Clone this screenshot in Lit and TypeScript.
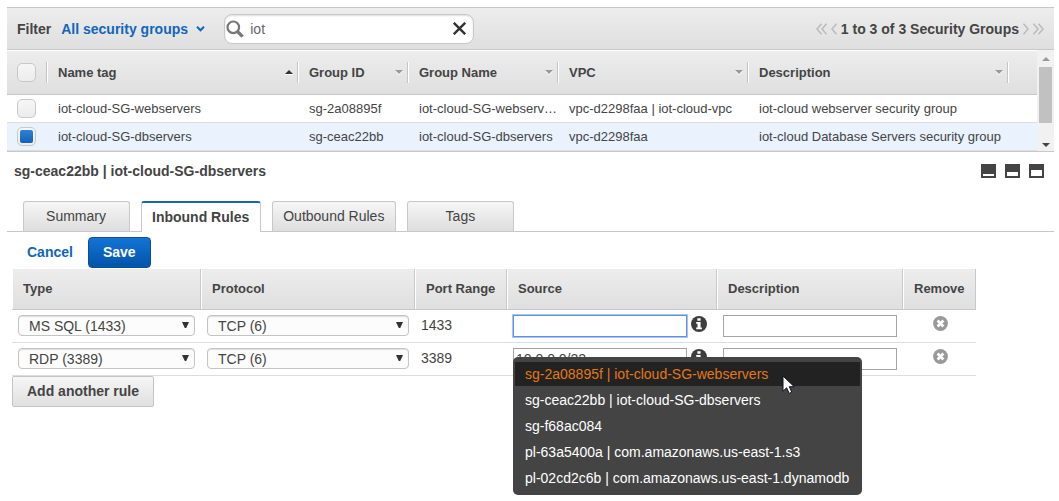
import { LitElement, html, css, svg } from "lit";
import { customElement, state } from "lit/decorators.js";
import { classMap } from "lit/directives/class-map.js";

interface Group {
  name: string;
  id: string;
  group: string;
  vpc: string;
  description: string;
}

interface Rule {
  type: string;
  port: string;
  source: string;
}

const GROUPS: Group[] = [
  {
    name: "iot-cloud-SG-webservers",
    id: "sg-2a08895f",
    group: "iot-cloud-SG-webservers",
    vpc: "vpc-d2298faa | iot-cloud-vpc",
    description: "iot-cloud webserver security group",
  },
  {
    name: "iot-cloud-SG-dbservers",
    id: "sg-ceac22bb",
    group: "iot-cloud-SG-dbservers",
    vpc: "vpc-d2298faa",
    description: "iot-cloud Database Servers security group",
  },
];

const COLUMNS = [
  { label: "Name tag", cls: "c-name" },
  { label: "Group ID", cls: "c-id" },
  { label: "Group Name", cls: "c-group" },
  { label: "VPC", cls: "c-vpc" },
  { label: "Description", cls: "c-desc" },
];

const RULES: Rule[] = [
  { type: "MS SQL (1433)", port: "1433", source: "" },
  { type: "RDP (3389)", port: "3389", source: "10.0.0.0/22" },
];

const TABS = ["Summary", "Inbound Rules", "Outbound Rules", "Tags"];

const SUGGESTIONS = [
  "sg-2a08895f | iot-cloud-SG-webservers",
  "sg-ceac22bb | iot-cloud-SG-dbservers",
  "sg-f68ac084",
  "pl-63a5400a | com.amazonaws.us-east-1.s3",
  "pl-02cd2c6b | com.amazonaws.us-east-1.dynamodb",
];

const icon = (w: number, h: number, body: unknown, cls = "") =>
  html`<svg class=${cls} width=${w} height=${h} viewBox="0 0 ${w} ${h}" aria-hidden="true">${body}</svg>`;

const stroke = (d: string, color: string, width: number) =>
  svg`<path d=${d} fill="none" stroke=${color} stroke-width=${width} />`;

const infoIcon = icon(
  16,
  16,
  svg`<circle cx="8" cy="8" r="8" fill="#3d3d3d" />
    <path d="M6.4 2.2h3.2v2.6H6.4z M5.2 6h4.4v5.4h1.3v1.8H5.2v-1.8h1.3V7.7H5.2z" fill="#fff" />`
);

const removeIcon = icon(
  15,
  15,
  svg`<circle cx="7.5" cy="7.5" r="7.4" fill="#999" />
    <path d="M4.6 4.6l5.8 5.8M10.4 4.6l-5.8 5.8" stroke="#fff" stroke-width="2.8" />`
);

const pointer = icon(
  13,
  20,
  svg`<path d="M1 1v15.2l3.6-3.4 2.6 5.6 2.6-1.2-2.5-5.5h4.9z" fill="#fff" stroke="#112" stroke-width="1" />`,
  "pointer"
);

@customElement("app-root")
export class AppRoot extends LitElement {
  @state() private selected = 1;
  @state() private tab = 1;

  static styles = css`
    :host {
      display: block;
      box-sizing: border-box;
      min-height: 100vh;
      padding: 7px 5px 6px 7px;
      color: #444;
      background: #fff;
      font: 13px/16px "Liberation Sans", Arial, sans-serif;
    }
    * {
      box-sizing: border-box;
    }
    button,
    input,
    select {
      margin: 0;
      color: inherit;
      font: inherit;
    }
    button {
      cursor: pointer;
    }
    svg {
      display: block;
      flex: none;
    }
    .plain {
      padding: 0;
      border: 0;
      background: none;
    }

    .filter {
      display: flex;
      align-items: center;
      height: 43px;
      padding: 0 10px;
      border: solid #c8c8c8;
      border-width: 1px 0;
      background: linear-gradient(#ededed, #dfdfdf);
      font-size: 14px;
      font-weight: bold;
    }
    .scope {
      display: grid;
      align-items: center;
      margin: 0 19px 0 10px;
      color: #1166bb;
    }
    .scope > * {
      grid-area: 1 / 1;
    }
    .scope select {
      appearance: none;
      padding: 0 17px 0 0;
      border: 0;
      background: none;
    }
    .scope svg {
      justify-self: end;
      pointer-events: none;
    }
    .search {
      display: flex;
      align-items: center;
      width: 250px;
      height: 30px;
      padding: 0 7px 0 1px;
      border: 1px solid #c8c8c8;
      border-radius: 8px;
      background: #fff;
      box-shadow: inset 0 1px 2px #ddd;
    }
    .search input {
      flex: 1;
      min-width: 0;
      padding: 0 6px;
      border: 0;
      outline: 0;
      background: none;
      color: #666;
      font-weight: normal;
    }
    .pager {
      display: flex;
      align-items: center;
      gap: 4px;
      margin-left: auto;
    }

    .list {
      display: flex;
      border-bottom: 1px solid #c8c8c8;
    }
    .groups {
      flex: 1;
      width: 100%;
      min-width: 0;
      table-layout: fixed;
      border-collapse: separate;
      border-spacing: 0;
      border-top: 1px solid #fff;
    }
    .groups th,
    .groups td {
      overflow: hidden;
      padding: 0 2px 0 10px;
      text-align: left;
      white-space: nowrap;
      text-overflow: ellipsis;
    }
    .groups td {
      height: 28px;
      border-bottom: 1px solid #ddd;
    }
    .groups th {
      height: 44px;
      padding: 0;
      border-bottom: 1px solid #c8c8c8;
      background: linear-gradient(#ededed, #dfdfdf);
    }
    .head {
      display: flex;
      align-items: center;
      justify-content: space-between;
      height: 21px;
      padding: 0 5px 0 10px;
      border-right: 1px solid #fff;
      box-shadow: inset -1px 0 #c4c4c4;
    }
    .c-check {
      width: 41px;
    }
    .c-name {
      width: 251px;
    }
    .c-id {
      width: 110px;
    }
    .c-group {
      width: 150px;
    }
    .c-vpc {
      width: 190px;
    }
    .c-desc {
      width: 260px;
    }
    .on td {
      background: #e9f2fd;
    }
    .check {
      appearance: none;
      display: grid;
      place-items: center;
      width: 19px;
      height: 19px;
      border: 1px solid #c8c8c8;
      border-radius: 5px;
      background: linear-gradient(#f6f6f6, #ececec);
    }
    .check:checked::before {
      content: "";
      width: 13px;
      height: 13px;
      border-radius: 2px;
      background: linear-gradient(#2e82d8, #1462b4);
    }
    .scroll {
      flex: none;
      display: flex;
      flex-direction: column;
      align-items: center;
      width: 17px;
      padding: 7px 0 4px;
      background: #f1f1f1;
    }
    .thumb {
      width: 13px;
      height: 56px;
      margin: 6px 0 auto;
      background: #c1c1c1;
    }

    .title {
      display: flex;
      align-items: center;
      justify-content: space-between;
      height: 38px;
      padding: 0 10px 0 7px;
    }
    h2 {
      margin: 0;
      font-size: 14px;
    }
    .panes {
      display: flex;
      gap: 9px;
    }
    .tabs {
      display: flex;
      gap: 11px;
      margin-top: 11px;
      padding-left: 16px;
      border-bottom: 1px solid #c8c8c8;
    }
    .tab {
      min-width: 107px;
      height: 30px;
      padding: 0 11px 2px 10px;
      border: 1px solid #c8c8c8;
      border-bottom: 0;
      border-radius: 3px 3px 0 0;
      background: linear-gradient(#f6f6f6, #dedede);
      font-size: 14px;
    }
    .tab.active {
      height: 31px;
      margin-bottom: -1px;
      border-top: 2px solid #1166bb;
      background: #fff;
      font-weight: bold;
    }

    .actions {
      display: flex;
      gap: 15px;
      padding: 5px 20px 1px;
      font-size: 14px;
      font-weight: bold;
    }
    .actions button {
      padding-bottom: 2px;
    }
    .cancel {
      color: #1166bb;
    }
    .save {
      height: 31px;
      padding: 0 14px;
      border: 1px solid #0a4f9b;
      border-radius: 4px;
      background: linear-gradient(#1373d6, #0354a8);
      color: #fff;
    }

    .rules {
      width: 964px;
      margin-left: 5px;
      table-layout: fixed;
      border-collapse: separate;
      border-spacing: 0;
      font-size: 14px;
    }
    .rules th {
      height: 41px;
      padding: 0 0 0 11px;
      border: solid #c8c8c8;
      border-width: 0 1px 1px 0;
      background: linear-gradient(#ededed, #dfdfdf);
      box-shadow: inset 1px 0 #fff;
      font-size: 13px;
      text-align: left;
    }
    .rules td {
      height: 33px;
      padding: 5px 6px;
      border-bottom: 1px solid #ddd;
      vertical-align: top;
    }
    .rules .port {
      padding-top: 7px;
    }
    .r-type {
      width: 189px;
    }
    .r-proto {
      width: 214px;
    }
    .r-port {
      width: 92px;
    }
    .r-source {
      width: 210px;
    }
    .r-desc {
      width: 186px;
    }
    .r-remove {
      width: 73px;
    }
    .pick {
      display: grid;
      align-items: center;
    }
    .pick > * {
      grid-area: 1 / 1;
    }
    .pick select {
      appearance: none;
      width: 100%;
      height: 21px;
      padding: 0 20px 0 10px;
      border: 1px solid #c4c4c4;
      border-radius: 4px;
      background: #fcfcfc;
      box-shadow: inset 0 1px 1px #ddd;
    }
    .pick svg {
      justify-self: end;
      margin: 0 6px 2px;
      pointer-events: none;
    }
    .text {
      display: block;
      width: 174px;
      height: 22px;
      padding: 0 2px;
      border: 1px solid #a5a5a5;
      outline: 0;
      background: #fff;
    }
    .text.focus {
      border-color: #5f8fe0;
      box-shadow: 0 0 0 1px #a9c5f5;
    }
    .source {
      position: relative;
      display: flex;
      gap: 4px;
    }
    .info {
      align-self: flex-start;
      margin-top: 1px;
    }
    .remove {
      display: block;
      margin: 1px 22px 0 auto;
    }
    .menu {
      position: absolute;
      z-index: 1;
      top: 42px;
      left: 0;
      display: grid;
      gap: 2px;
      margin: 0;
      padding: 5px 2px;
      border-radius: 5px;
      background: #444;
      color: #fff;
      list-style: none;
      white-space: nowrap;
    }
    .menu li {
      position: relative;
      padding: 4px 11px 4px 10px;
    }
    .menu .hover {
      background: #222;
      color: #e47911;
    }
    .pointer {
      position: absolute;
      top: 13px;
      left: 267px;
    }
    .add {
      height: 31px;
      margin-left: 5px;
      padding: 0 14px 2px;
      border: 1px solid #c4c4c4;
      border-radius: 2px;
      background: linear-gradient(#f6f6f6, #e0e0e0);
      font-size: 14px;
      font-weight: bold;
    }
  `;

  private pager(label: string, width: number, d: string) {
    return html`<button class="plain" aria-label=${label}>${icon(width, 12, stroke(d, "#bbb", 1.5))}</button>`;
  }

  private pane(label: string, top: number) {
    return html`<button class="plain" aria-label=${label}>
      ${icon(
        15,
        14,
        svg`<path fill="#444" fill-rule="evenodd" d="M0 0h15v14H0z M2 ${top}h11V12H2z" />`
      )}
    </button>`;
  }

  private select(label: string, value: string) {
    return html`<div class="pick">
      <select aria-label=${label}>
        <option>${value}</option>
      </select>
      ${icon(7, 6, svg`<path d="M0 0h7L4.2 6H2.8z" fill="#333" />`)}
    </div>`;
  }

  private menu() {
    return html`<ul class="menu" role="listbox">
      ${SUGGESTIONS.map(
        (text, i) =>
          html`<li role="option" class=${classMap({ hover: i === 0 })}>${text}${i === 0 ? pointer : ""}</li>`
      )}
    </ul>`;
  }

  render() {
    return html`
      <div class="filter">
        <label for="scope">Filter</label>
        <div class="scope">
          <select id="scope">
            <option>All security groups</option>
          </select>
          ${icon(9, 6, stroke("M1 .8l3.5 3.5L8 .8", "#1166bb", 2))}
        </div>
        <div class="search">
          ${icon(
            18,
            18,
            svg`<circle cx="7.3" cy="7.3" r="5.8" fill="none" stroke="#777" stroke-width="2.2" />
              <path d="M11.6 11.6l5 5" stroke="#777" stroke-width="3.2" />`
          )}
          <input type="text" aria-label="Search security groups" .value=${"iot"} />
          <button class="plain" aria-label="Clear search">
            ${icon(13, 13, stroke("M.8.8l11.4 11.4M12.2.8L.8 12.2", "#333", 2.4))}
          </button>
        </div>
        <div class="pager">
          ${this.pager("First page", 11, "M5.5.7L1 6l4.5 5.3M10.5.7L6 6l4.5 5.3")}
          ${this.pager("Previous page", 6, "M5.5.7L1 6l4.5 5.3")}
          <span>1 to 3 of 3 Security Groups</span>
          ${this.pager("Next page", 6, "M.5.7L5 6 .5 11.3")}
          ${this.pager("Last page", 11, "M.5.7L5 6 .5 11.3M5.5.7L10 6l-4.5 5.3")}
        </div>
      </div>

      <div class="list">
        <table class="groups">
          <thead>
            <tr>
              <th class="c-check">
                <div class="head"><input class="check" type="checkbox" aria-label="Select all" /></div>
              </th>
              ${COLUMNS.map(
                (c, i) => html`<th class=${c.cls}>
                  <div class="head">
                    ${c.label}
                    ${i === 0
                      ? icon(8, 5, svg`<path d="M0 4l4-4 4 4z" fill="#333" /><path d="M0 4h8v1H0z" fill="#fff" />`)
                      : icon(8, 5, svg`<path d="M0 1l4 4 4-4z" fill="#fff" /><path d="M0 0l4 4 4-4z" fill="#999" />`)}
                  </div>
                </th>`
              )}
              <th></th>
            </tr>
          </thead>
          <tbody>
            ${GROUPS.map(
              (g, i) => html`<tr class=${classMap({ on: i === this.selected })}>
                <td>
                  <input
                    class="check"
                    type="checkbox"
                    aria-label="Select ${g.name}"
                    .checked=${i === this.selected}
                    @change=${() => (this.selected = i)}
                  />
                </td>
                <td>${g.name}</td>
                <td>${g.id}</td>
                <td>${g.group}</td>
                <td>${g.vpc}</td>
                <td>${g.description}</td>
                <td></td>
              </tr>`
            )}
          </tbody>
        </table>
        <div class="scroll">
          ${icon(8, 4, svg`<path d="M0 4l4-4 4 4z" fill="#999" />`)}
          <div class="thumb"></div>
          ${icon(8, 4, svg`<path d="M0 0l4 4 4-4z" fill="#444" />`)}
        </div>
      </div>

      <div class="title">
        <h2>sg-ceac22bb | iot-cloud-SG-dbservers</h2>
        <div class="panes">
          ${this.pane("Minimize details", 10)} ${this.pane("Split view", 8)} ${this.pane("Maximize details", 6)}
        </div>
      </div>

      <div class="tabs" role="tablist">
        ${TABS.map(
          (t, i) => html`<button
            role="tab"
            class=${classMap({ tab: true, active: i === this.tab })}
            @click=${() => (this.tab = i)}
          >
            ${t}
          </button>`
        )}
      </div>

      <div class="actions">
        <button class="plain cancel">Cancel</button>
        <button class="save">Save</button>
      </div>

      <table class="rules">
        <thead>
          <tr>
            <th class="r-type">Type</th>
            <th class="r-proto">Protocol</th>
            <th class="r-port">Port Range</th>
            <th class="r-source">Source</th>
            <th class="r-desc">Description</th>
            <th class="r-remove">Remove</th>
          </tr>
        </thead>
        <tbody>
          ${RULES.map(
            (r, i) => html`<tr>
              <td>${this.select("Type", r.type)}</td>
              <td>${this.select("Protocol", "TCP (6)")}</td>
              <td class="port">${r.port}</td>
              <td>
                <div class="source">
                  <input
                    type="text"
                    class=${classMap({ text: true, focus: i === 0 })}
                    aria-label="Source"
                    .value=${r.source}
                  />
                  <button class="plain info" aria-label="About source">${infoIcon}</button>
                  ${i === 0 ? this.menu() : ""}
                </div>
              </td>
              <td><input type="text" class="text" aria-label="Description" /></td>
              <td><button class="plain remove" aria-label="Remove rule">${removeIcon}</button></td>
            </tr>`
          )}
        </tbody>
      </table>
      <button class="add">Add another rule</button>
    `;
  }
}
